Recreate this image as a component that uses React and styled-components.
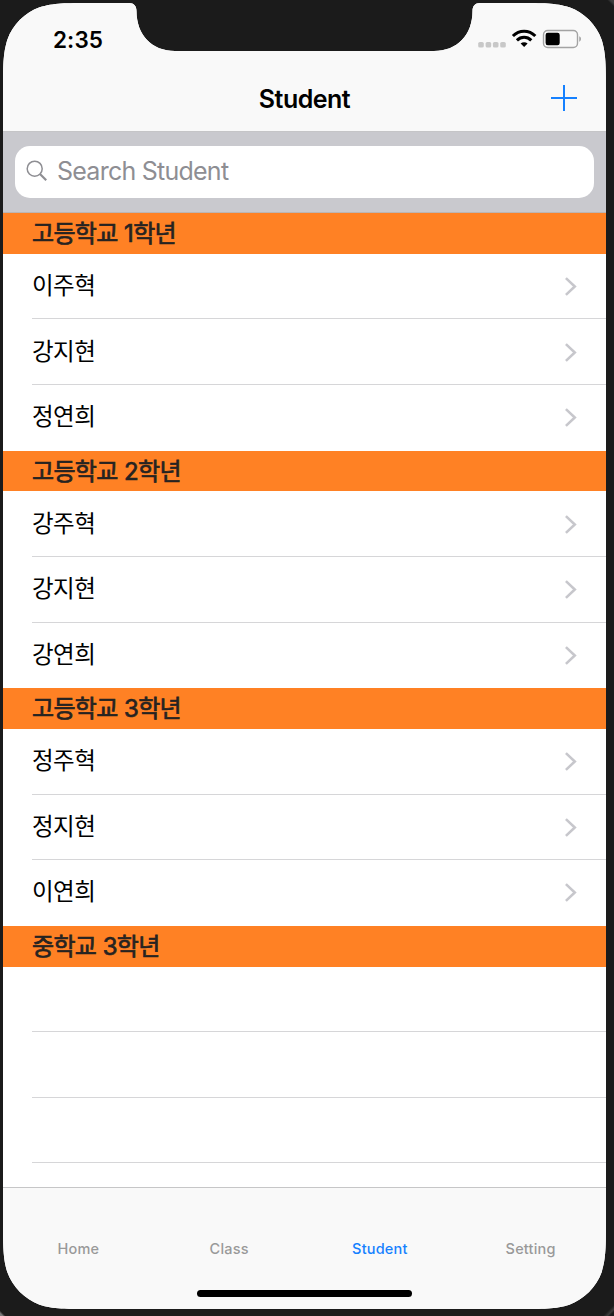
import React from "react";
import styled, { createGlobalStyle } from "styled-components";

const GlobalStyle = createGlobalStyle`
  * { box-sizing: border-box; }
  body { margin: 0; background: #1b1b1b; }
`;

const SCREEN = { w: 603, h: 1306 };

/* Continuous-curvature corners with the notch cut out of the top edge. */
function screenOutline(w, h, r) {
  const a = 1.528665 * r, b = 1.088493 * r, c = 0.868407 * r;
  const d = 0.631494 * r, e = 0.074911 * r, f = 0.372824 * r, g = 0.16906 * r;
  return [
    `M${a} 0 H126`,
    "C131 0 133.5 3 133.5 8 C133.5 32 149 48 172 48",
    `H${w - 172}`,
    `C${w - 149} 48 ${w - 133.5} 32 ${w - 133.5} 8 C${w - 133.5} 3 ${w - 131} 0 ${w - 126} 0`,
    `H${w - a}`,
    `C${w - b} 0 ${w - c} 0 ${w - d} ${e} C${w - f} ${g} ${w - g} ${f} ${w - e} ${d} C${w} ${c} ${w} ${b} ${w} ${a}`,
    `V${h - a}`,
    `C${w} ${h - b} ${w} ${h - c} ${w - e} ${h - d} C${w - g} ${h - f} ${w - f} ${h - g} ${w - d} ${h - e} C${w - c} ${h} ${w - b} ${h} ${w - a} ${h}`,
    `H${a}`,
    `C${b} ${h} ${c} ${h} ${d} ${h - e} C${f} ${h - g} ${g} ${h - f} ${e} ${h - d} C0 ${h - c} 0 ${h - b} 0 ${h - a}`,
    `V${a}`,
    `C0 ${b} 0 ${c} ${e} ${d} C${g} ${f} ${f} ${g} ${d} ${e} C${c} 0 ${b} 0 ${a} 0 Z`,
  ].join(" ");
}

const Device = styled.div`
  width: 614px;
  height: 1316px;
  padding: 3px 8px 7px 3px;
  background:
    linear-gradient(to bottom left, #3c3c3c 2.5px, transparent 5px),
    linear-gradient(to top left, #1b1b1b 3px, #3a3a3a 5px, transparent 8px),
    linear-gradient(45deg, #777 2px, transparent 4px),
    #1b1b1b;
  background-size: 20px 20px, 20px 20px, 20px 20px, auto;
  background-position: top right, bottom right, bottom left, 0 0;
  background-repeat: no-repeat;
  overflow: hidden;
  font-family: Inter, "Noto Sans CJK KR", sans-serif;
`;

const Screen = styled.main`
  display: flex;
  flex-direction: column;
  width: ${SCREEN.w}px;
  height: ${SCREEN.h}px;
  background: #fff;
  clip-path: path("${screenOutline(SCREEN.w, SCREEN.h, 58)}");
`;

const StatusBar = styled.div`
  display: flex;
  justify-content: space-between;
  height: 64px;
  padding: 24px 25px 0 50px;
  background: #f9f9f9;
`;

const Clock = styled.span`
  font-size: 22.5px;
  line-height: 26px;
  font-weight: 600;
  letter-spacing: 0.1px;
`;

const NavBar = styled.header`
  display: grid;
  grid-template-columns: 1fr auto 1fr;
  align-items: center;
  height: 64px;
  padding: 0 28px;
  background: #f9f9f9;
`;

const Title = styled.h1`
  grid-column: 2;
  margin: 0;
  font-size: 25px;
  line-height: 30px;
  font-weight: 600;
  letter-spacing: -0.5px;
`;

const AddButton = styled.button`
  justify-self: end;
  display: flex;
  margin-bottom: 2px;
  padding: 0;
  border: 0;
  background: none;
`;

const SearchBar = styled.div`
  height: 82px;
  padding: 14px 12px 15px;
  background: #c9c9ce;
  border-top: 1px solid #c5c5c7;
  border-bottom: 1px solid #bcb5b3;
`;

const SearchField = styled.label`
  display: flex;
  align-items: center;
  gap: 9px;
  height: 52px;
  padding: 0 0 2px 11px;
  border-radius: 15px;
  background: #fff;
  color: #8e8e93;
  font-size: 25px;
  letter-spacing: -0.75px;
`;

const List = styled.div`
  flex: 1;
  min-height: 0;
  overflow: hidden;
`;

const SectionHeader = styled.h2`
  height: 40.8px;
  margin: 0;
  padding-left: 29px;
  background: #ff8124;
  color: #262321;
  font-size: 24px;
  line-height: 42px;
  font-weight: 400;
  letter-spacing: -0.7px;
  word-spacing: 0.5px;
  -webkit-text-stroke: 0.7px #262321;
`;

const Row = styled.div`
  display: flex;
  justify-content: space-between;
  align-items: center;
  height: 65.6px;
  margin-left: 29px;
  padding-right: 29px;
  border-bottom: 1px solid ${(p) => (p.$last ? "transparent" : "#d6d6d8")};
`;

const Name = styled.span`
  color: #000;
  font-size: 23.5px;
  line-height: 34px;
  letter-spacing: -0.5px;
`;

const TabBar = styled.nav`
  display: grid;
  grid-template-columns: repeat(4, 1fr);
  height: 122px;
  padding-top: 51px;
  background: #f9f9f9;
  border-top: 1px solid #c6c6c7;
`;

const Tab = styled.a`
  color: ${(p) => (p.$active ? "#1681ff" : "#999")};
  font-size: 14.5px;
  line-height: 20px;
  font-weight: 500;
  letter-spacing: 0.2px;
  text-align: center;
`;

const HomeIndicator = styled.div`
  grid-column: 1 / -1;
  justify-self: center;
  align-self: end;
  width: 215px;
  height: 7px;
  margin-bottom: 12px;
  border-radius: 4px;
  background: #000;
`;

const StatusIcons = () => (
  <svg width="104" height="30" viewBox="0 0.3 104 30">
    <g fill="#c8c8c8">
      {[0, 7.4, 14.7, 22].map((x) => (
        <rect key={x} x={1.2 + x} y="15.2" width="5.6" height="5.6" rx="1.6" />
      ))}
    </g>
    <g fill="none" stroke="#000" strokeWidth="3.1">
      <path d="M35.9 9.3 C42.3 2.9 51.9 2.9 58.3 9.3" />
      <path d="M39.9 13.6 C44.1 9.6 50.1 9.6 54.3 13.6" />
    </g>
    <path d="M43.6 16.9 C45.7 15 48.5 15 50.6 16.9 L47.1 20.4 Z" fill="#000" />
    <rect x="66.5" y="3.8" width="34" height="17" rx="4.2" fill="none" stroke="#a3a3a3" strokeWidth="1.4" />
    <rect x="68.6" y="6" width="14.1" height="12.6" rx="2.2" fill="#000" />
    <path d="M102.3 9.6 C104.4 10.5 104.4 14.1 102.3 15 Z" fill="#999" />
  </svg>
);

const PlusIcon = () => (
  <svg width="28" height="28" viewBox="0 0 28 28" stroke="#1681ff" strokeWidth="2">
    <path d="M14 1V27M1 14H27" />
  </svg>
);

const SearchIcon = () => (
  <svg width="22" height="22" viewBox="0 0 22 22" fill="none" stroke="#8e8e93">
    <circle cx="8.7" cy="8.7" r="7.5" strokeWidth="1.5" />
    <path d="M14 14L20.2 20.2" strokeWidth="2.2" />
  </svg>
);

const Chevron = () => (
  <svg width="13" height="20" viewBox="0 0 13 20" fill="none" stroke="#c7c7cc" strokeWidth="2.6">
    <path d="M1.9 2.1L10.8 10.5L1.9 18.9" />
  </svg>
);

const SECTIONS = [
  { title: "고등학교 1학년", names: ["이주혁", "강지현", "정연희"] },
  { title: "고등학교 2학년", names: ["강주혁", "강지현", "강연희"] },
  { title: "고등학교 3학년", names: ["정주혁", "정지현", "이연희"] },
  { title: "중학교 3학년", names: [] },
];

const TABS = ["Home", "Class", "Student", "Setting"];

export default function App() {
  return (
    <>
      <GlobalStyle />
      <Device>
        <Screen>
          <StatusBar>
            <Clock>2:35</Clock>
            <StatusIcons />
          </StatusBar>
          <NavBar>
            <Title>Student</Title>
            <AddButton aria-label="Add">
              <PlusIcon />
            </AddButton>
          </NavBar>
          <SearchBar>
            <SearchField>
              <SearchIcon />
              Search Student
            </SearchField>
          </SearchBar>
          <List>
            {SECTIONS.map((s) => (
              <section key={s.title}>
                <SectionHeader>{s.title}</SectionHeader>
                {s.names.map((n, i) => (
                  <Row key={n} $last={i === s.names.length - 1}>
                    <Name>{n}</Name>
                    <Chevron />
                  </Row>
                ))}
              </section>
            ))}
            {[0, 1, 2].map((i) => (
              <Row key={i} />
            ))}
          </List>
          <TabBar>
            {TABS.map((t) => (
              <Tab key={t} $active={t === "Student"}>{t}</Tab>
            ))}
            <HomeIndicator />
          </TabBar>
        </Screen>
      </Device>
    </>
  );
}
